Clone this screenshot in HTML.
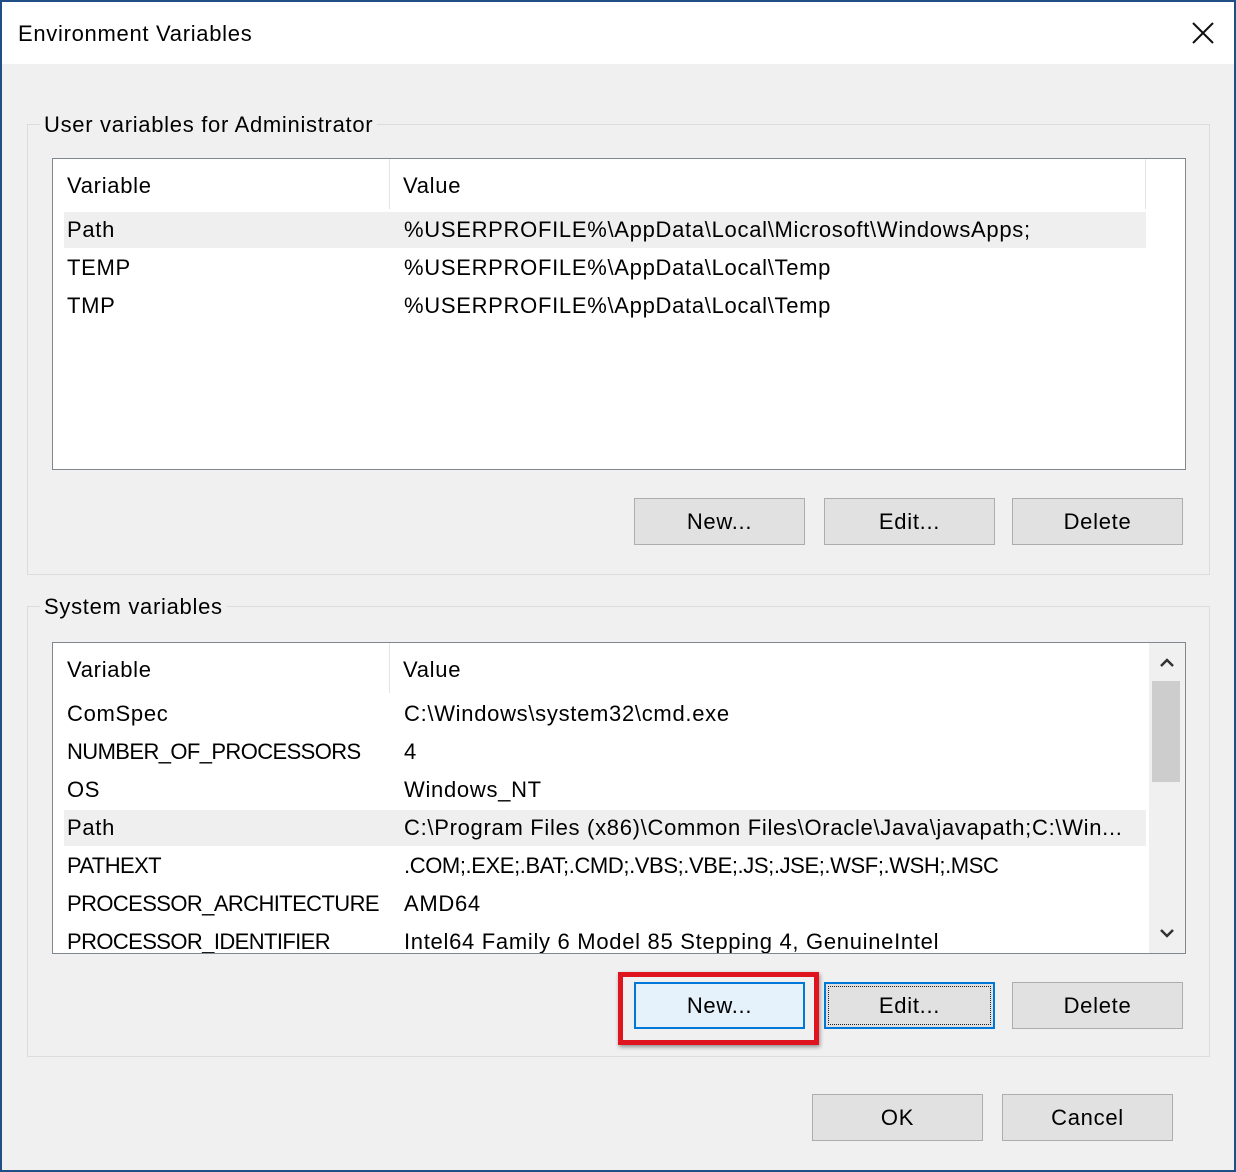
<!DOCTYPE html>
<html><head><meta charset="utf-8"><style>
*{box-sizing:border-box;margin:0;padding:0}
body{width:1236px;height:1172px;overflow:hidden;background:#1f4f86;font-family:"Liberation Sans",sans-serif;font-size:22px;letter-spacing:0.7px;color:#000}
.win{position:absolute;left:2px;top:2px;width:1232px;height:1168px;background:#f0f0f0}
.title{position:absolute;left:0;top:0;width:1232px;height:62px;background:#fff}
.title span{position:absolute;left:16px;top:19px;font-size:22px}
.abs{position:absolute}
.grp{position:absolute;border:1px solid #dcdcdc}
.lbl{position:absolute;background:#f0f0f0;padding:0 4px;line-height:26px}
.list{position:absolute;background:#fff;border:1px solid #82878f;overflow:hidden}
.row{position:absolute;left:11px;height:36px;line-height:36px;white-space:nowrap}
.c2{position:absolute;left:351px}
.cap{letter-spacing:-0.6px}
.hl{background:#efefef}
.btn{position:absolute;width:171px;height:47px;background:#e1e1e1;border:1px solid #adadad;text-align:center;line-height:45px}
</style></head><body>
<div class="win">
<div class="title"><span>Environment Variables</span>
<svg class="abs" style="left:1190px;top:20px" width="22" height="22"><path d="M1 1L21 21M21 1L1 21" stroke="#111" stroke-width="2"/></svg></div>

<div class="grp" style="left:25px;top:122px;width:1183px;height:451px"></div>
<div class="lbl" style="left:38px;top:110px">User variables for Administrator</div>
<div class="list" style="left:50px;top:156px;width:1134px;height:312px">
 <div class="abs" style="left:336px;top:0;width:1px;height:50px;background:#e5e5e5"></div>
 <div class="abs" style="left:1092px;top:0;width:1px;height:50px;background:#e5e5e5"></div>
 <div class="row" style="top:9px;left:14px">Variable<span class="c2" style="left:336px">Value</span></div>
 <div class="row hl" style="top:53px;width:1082px;padding-left:3px">Path<span class="c2" style="left:340px">%USERPROFILE%\AppData\Local\Microsoft\WindowsApps;</span></div>
 <div class="row" style="top:91px;padding-left:3px">TEMP<span class="c2" style="left:340px">%USERPROFILE%\AppData\Local\Temp</span></div>
 <div class="row" style="top:129px;padding-left:3px">TMP<span class="c2" style="left:340px">%USERPROFILE%\AppData\Local\Temp</span></div>
</div>
<div class="btn" style="left:632px;top:496px">New...</div>
<div class="btn" style="left:822px;top:496px">Edit...</div>
<div class="btn" style="left:1010px;top:496px">Delete</div>

<div class="grp" style="left:25px;top:604px;width:1183px;height:451px"></div>
<div class="lbl" style="left:38px;top:592px">System variables</div>
<div class="list" style="left:50px;top:640px;width:1134px;height:312px">
 <div class="abs" style="left:336px;top:0;width:1px;height:50px;background:#e5e5e5"></div>
 <div class="row" style="top:9px;left:14px">Variable<span class="c2" style="left:336px">Value</span></div>
 <div class="row" style="top:53px;padding-left:3px">ComSpec<span class="c2" style="left:340px">C:\Windows\system32\cmd.exe</span></div>
 <div class="row" style="top:91px;padding-left:3px"><span class="cap">NUMBER_OF_PROCESSORS</span><span class="c2" style="left:340px">4</span></div>
 <div class="row" style="top:129px;padding-left:3px">OS<span class="c2" style="left:340px">Windows_NT</span></div>
 <div class="row hl" style="top:167px;width:1082px;padding-left:3px">Path<span class="c2" style="left:340px">C:\Program Files (x86)\Common Files\Oracle\Java\javapath;C:\Win...</span></div>
 <div class="row" style="top:205px;padding-left:3px"><span class="cap">PATHEXT</span><span class="c2" style="left:340px;letter-spacing:-0.4px">.COM;.EXE;.BAT;.CMD;.VBS;.VBE;.JS;.JSE;.WSF;.WSH;.MSC</span></div>
 <div class="row" style="top:243px;padding-left:3px"><span class="cap">PROCESSOR_ARCHITECTURE</span><span class="c2" style="left:340px">AMD64</span></div>
 <div class="row" style="top:281px;padding-left:3px"><span class="cap">PROCESSOR_IDENTIFIER</span><span class="c2" style="left:340px">Intel64 Family 6 Model 85 Stepping 4, GenuineIntel</span></div>
 <div class="abs" style="left:1096px;top:0;width:36px;height:310px;background:#f0f0f0">
  <svg class="abs" style="left:10px;top:14px" width="16" height="12"><path d="M2 9L8 3L14 9" stroke="#333" stroke-width="2.5" fill="none"/></svg>
  <div class="abs" style="left:3px;top:38px;width:28px;height:101px;background:#cdcdcd"></div>
  <svg class="abs" style="left:10px;top:284px" width="16" height="12"><path d="M2 3L8 9L14 3" stroke="#333" stroke-width="2.5" fill="none"/></svg>
 </div>
</div>
<div class="abs" style="left:616px;top:970px;width:201px;height:73px;border:5px solid #e0141e;box-shadow:1px 2px 4px rgba(0,0,0,.4)"></div>
<div class="btn" style="left:632px;top:980px;background:#e5f1fb;border:2px solid #0078d7;line-height:43px">New...</div>
<div class="btn" style="left:822px;top:980px;border:2px solid #0078d7;line-height:43px"><div class="abs" style="left:2px;top:2px;right:2px;bottom:2px;border:1px dotted #222"></div>Edit...</div>
<div class="btn" style="left:1010px;top:980px">Delete</div>

<div class="btn" style="left:810px;top:1092px">OK</div>
<div class="btn" style="left:1000px;top:1092px">Cancel</div>
</div>
</body></html>
